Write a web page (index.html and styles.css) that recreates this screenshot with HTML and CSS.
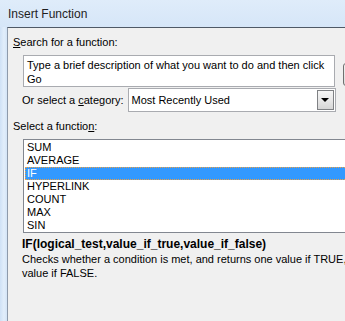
FILE: index.html
```html
<!DOCTYPE html>
<html>
<head>
  <meta charset="UTF-8" />
  <title>Insert Function</title>
  <link rel="stylesheet" href="styles.css">
</head>
<body>
  <div id="window">
    <div id="title-bar">Insert Function</div>
    <div id="client">
      <div class="label label-top"><u>S</u>earch for a function:</div>
      <div id="search-row">
        <div id="search-box">Type a brief description of what you want to do and then click Go</div>
        <button id="go-btn" aria-label="Go"></button>
      </div>
      <div id="category-row">
        <span class="label">Or select a <u>c</u>ategory:</span>
        <div id="combo">
          <span id="combo-text">Most Recently Used</span>
          <span id="combo-btn"><span class="arrow"></span></span>
        </div>
      </div>
      <div class="label label-list">Select a functio<u>n</u>:</div>
      <div id="func-list">
        <div class="item">SUM</div>
        <div class="item">AVERAGE</div>
        <div class="item selected">IF</div>
        <div class="item">HYPERLINK</div>
        <div class="item">COUNT</div>
        <div class="item">MAX</div>
        <div class="item">SIN</div>
      </div>
      <div id="syntax">IF(logical_test,value_if_true,value_if_false)</div>
      <div id="description">
        <div>Checks whether a condition is met, and returns one value if TRUE, and another</div>
        <div>value if FALSE.</div>
      </div>
    </div>
  </div>
</body>
</html>
```

FILE: styles.css
```css
html, body {
  margin: 0;
  padding: 0;
  width: 345px;
  height: 321px;
  overflow: hidden;
}
body {
  font-family: "Liberation Sans", Arial, sans-serif;
  font-size: 11px;
  color: #000;
}
#window {
  display: flex;
  flex-direction: column;
  height: 321px;
  background: linear-gradient(90deg, #cfe1f6 0, #e2eefb 4px, #d3e4f7 7px);
}
#title-bar {
  height: 27px;
  box-sizing: border-box;
  padding: 6px 0 0 8px;
  font-size: 12px;
  line-height: 16px;
  color: #1e1e1e;
  background: linear-gradient(180deg, #dfecfa, #d6e6f8);
}
#client {
  flex: 1;
  margin-left: 7px;
  border-left: 1px solid #8e9aab;
  border-top: 1px solid #4f5966;
  background: #f0f0f0;
  min-width: 0;
}
.label {
  line-height: 13px;
  white-space: nowrap;
}
.label-top {
  padding: 8px 0 0 5px;
}
#search-row {
  display: flex;
  margin: 6px 0 0 15px;
}
#search-box {
  flex: none;
  width: 312px;
  height: 32px;
  box-sizing: border-box;
  padding: 2px 3px 0;
  border: 1px solid #a9abb0;
  background: #fff;
  line-height: 14px;
}
#go-btn {
  flex: none;
  margin: 8px 0 0 8px;
  width: 75px;
  height: 23px;
  border: 1px solid #707070;
  border-radius: 3px;
  background: linear-gradient(#f2f2f2, #dcdcdc);
}
#category-row {
  display: flex;
  align-items: center;
  margin: 1px 0 0 14px;
}
#combo {
  display: flex;
  align-items: center;
  justify-content: space-between;
  margin-left: 4px;
  width: 208px;
  height: 24px;
  box-sizing: border-box;
  border: 1px solid #a9abb0;
  background: #fff;
  padding: 0 1px 0 3px;
}
#combo-btn {
  display: flex;
  align-items: center;
  justify-content: center;
  width: 17px;
  height: 20px;
  box-sizing: border-box;
  border: 1px solid #7f8184;
  background: linear-gradient(#f6f6f6 0, #e8e8e8 50%, #d6d6d6 100%);
}
.arrow {
  width: 0;
  height: 0;
  border-left: 4px solid transparent;
  border-right: 4px solid transparent;
  border-top: 4px solid #000;
}
.label-list {
  margin: 8px 0 0 5px;
}
#func-list {
  margin: 6px 0 0 15px;
  width: 340px;
  height: 94px;
  box-sizing: border-box;
  border: 1px solid #828790;
  background: #fff;
  padding-top: 1px;
}
.item {
  margin: 0 1px;
  padding-left: 2px;
  height: 13px;
  line-height: 13px;
}
.item.selected {
  background: #3399ff;
  color: #fff;
  outline: 1px dotted #f0a040;
  outline-offset: -1px;
}
#syntax {
  margin: 4px 0 0 14px;
  font-size: 12px;
  font-weight: bold;
  line-height: 14px;
  white-space: nowrap;
}
#description {
  margin: 1px 0 0 14px;
  line-height: 14px;
  white-space: nowrap;
}
```
